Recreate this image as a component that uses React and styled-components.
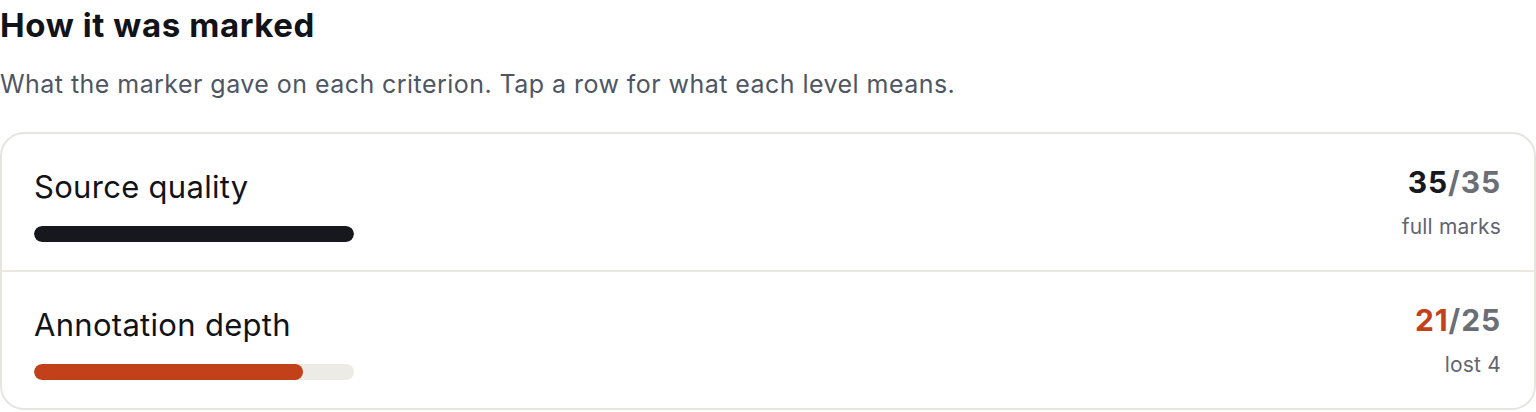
import React from "react";
import styled, { createGlobalStyle } from "styled-components";

const Global = createGlobalStyle`
  html, body { margin: 0; padding: 0; background: #ffffff; }
  body { font-family: Inter, "Noto Sans", sans-serif; color: #15171c; }
`;

const Page = styled.div`
  display: flex;
  flex-direction: column;
`;

const Heading = styled.h2`
  margin: 0;
  padding-top: 5px;
  font-size: 33px;
  line-height: 40px;
  font-weight: 700;
  letter-spacing: 0.6px;
  color: #111318;
`;

const Lead = styled.p`
  margin: 24px 0 0;
  font-size: 25px;
  line-height: 30px;
  color: #4f5663;
  letter-spacing: 0.45px;
`;

const Card = styled.div`
  margin-top: 33px;
  border: 2px solid #e6e5e0;
  border-radius: 24px;
  overflow: hidden;
`;

const Row = styled.div`
  display: flex;
  justify-content: space-between;
  align-items: flex-start;
  height: 136px;
  box-sizing: border-box;
  padding: 31px 33px 0 32px;
  & + & { border-top: 2px solid #e9e8e3; height: 138px; }
`;

const Left = styled.div`
  display: flex;
  flex-direction: column;
  gap: 21px;
  padding-top: 4px;
`;

const Label = styled.div`
  font-size: 31px;
  line-height: 36px;
  color: #111318;
  letter-spacing: 0.3px;
`;

const Track = styled.div`
  width: 320px;
  height: 16px;
  border-radius: 8px;
  background: #ecebe6;
  overflow: hidden;
`;

const Fill = styled.div`
  height: 100%;
  border-radius: 8px;
  background: ${(p) => p.$color};
`;

const Right = styled.div`
  display: flex;
  flex-direction: column;
  align-items: flex-end;
  gap: 15px;
`;

const Score = styled.div`
  font-size: 30px;
  line-height: 34px;
  font-weight: 700;
  letter-spacing: 0.9px;
  color: #6b6e76;
`;

const Got = styled.span`
  color: ${(p) => p.$color};
`;

const Note = styled.div`
  font-size: 21px;
  line-height: 26px;
  letter-spacing: 0.2px;
  color: #5f6571;
`;

const rows = [
  { label: "Source quality", got: 35, max: 35, note: "full marks", color: "#16181d" },
  { label: "Annotation depth", got: 21, max: 25, note: "lost 4", color: "#c2401a" },
];

export default function App() {
  return (
    <Page>
      <Global />
      <Heading>How it was marked</Heading>
      <Lead>What the marker gave on each criterion. Tap a row for what each level means.</Lead>
      <Card>
        {rows.map((r) => (
          <Row key={r.label}>
            <Left>
              <Label>{r.label}</Label>
              <Track>
                <Fill $color={r.color} style={{ width: `${(r.got / r.max) * 100}%` }} />
              </Track>
            </Left>
            <Right>
              <Score>
                <Got $color={r.color}>{r.got}</Got>/{r.max}
              </Score>
              <Note>{r.note}</Note>
            </Right>
          </Row>
        ))}
      </Card>
    </Page>
  );
}
